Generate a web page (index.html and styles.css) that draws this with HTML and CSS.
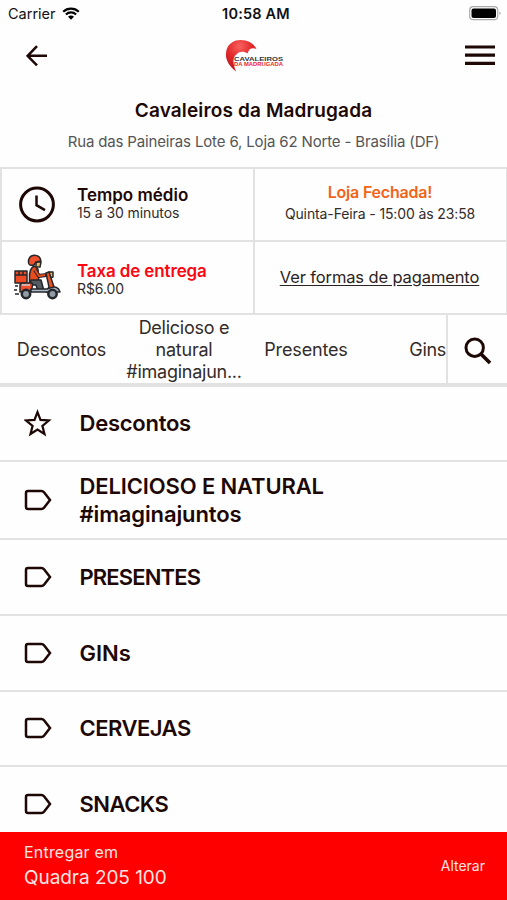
FILE: index.html
```html
<!DOCTYPE html>
<html lang="pt-BR">
<head>
<meta charset="utf-8">
<title>Cavaleiros da Madrugada</title>
<link rel="stylesheet" href="styles.css">
</head>
<body>
<svg width="0" height="0" class="defs"><symbol id="tag" viewBox="0 0 28 22"><path d="M4 2H17.500Q19 2 20 3.300L26 11L20 18.700Q19 20 17.500 20H4Q2 20 2 18V4Q2 2 4 2Z" fill="none" stroke="#1d0805" stroke-width="2.500"/></symbol></svg>
<div class="app">
  <div class="status">
    <div class="carrier"><span class="carrier-name">Carrier</span>
      <svg width="18" height="13" viewBox="0 0 18 13"><g fill="none" stroke="#000" stroke-width="2.200"><path d="M1.200 4.700A11.200 11.200 0 0 1 16.800 4.700"/><path d="M3.900 7.500A7.200 7.200 0 0 1 14.100 7.500"/></g><path d="M9 12.800L6 9.700A4.200 4.200 0 0 1 12 9.700Z"/></svg>
    </div>
    <span class="time">10:58 AM</span>
    <svg class="battery" width="33" height="15" viewBox="0 0 33 15"><rect x=".7" y=".7" width="28" height="13" rx="3.500" fill="#fff" stroke="#aaa" stroke-width="1.200"/><rect x="2.500" y="2.500" width="24.500" height="9.500" rx="2"/><path d="M30.500 5.500Q32.500 7.200 30.500 9Z" fill="#888"/></svg>
  </div>
  <header class="header">
    <svg width="22" height="22" viewBox="0 0 22 22"><path d="M11 1.200L1.600 10.800L11 20.400M2 10.800H21" fill="none" stroke="#1d0805" stroke-width="2.500"/></svg>
    <svg class="logo" width="60" height="34" viewBox="0 0 60 34">
      <defs><radialGradient id="red" cx=".45" cy=".2" r=".8"><stop offset="0" stop-color="#f8615e"/><stop offset=".5" stop-color="#e2292b"/><stop offset="1" stop-color="#b91520"/></radialGradient></defs>
      <path d="M11 32.500C4 27 .5 21 1 14.500C1.500 5.500 8 1 15.500 1C23 1 28.500 4 31.500 10C27 8 24 9.500 22.500 14.500C19 12 14 12.500 12 15C7.500 18 7.500 24 11 32.500Z" fill="url(#red)"/>
      <g font-family="Liberation Sans" font-weight="700"><text x="9" y="21.700" font-size="6" textLength="49" lengthAdjust="spacingAndGlyphs" fill="#333">CAVALEIROS</text><text x="9" y="26.600" font-size="5.400" textLength="49" lengthAdjust="spacingAndGlyphs" fill="#ef2424">DA MADRUGADA</text></g>
    </svg>
    <svg width="30" height="22" viewBox="0 0 30 22"><path d="M0 2H30M0 10.200H30M0 18.400H30" stroke="#1d0805" stroke-width="3.200"/></svg>
  </header>
  <section class="store">
    <h1>Cavaleiros da Madrugada</h1>
    <p>Rua das Paineiras Lote 6, Loja 62 Norte - Brasília (DF)</p>
  </section>
  <section class="info">
    <div class="cell average">
      <div class="pic"><svg width="38" height="38" viewBox="0 0 38 38"><g fill="none" stroke="#1d0805"><circle cx="19" cy="18.500" r="16.400" stroke-width="3"/><path d="M18.500 9.500V19.200L27 24.100" stroke-width="2.500"/></g></svg></div>
      <div class="copy"><div class="strong">Tempo médio</div><div class="small">15 a 30 minutos</div></div>
    </div>
    <div class="cell mid hours"><div class="closed">Loja Fechada!</div><div class="sub">Quinta-Feira - 15:00 às 23:58</div></div>
    <div class="cell fee">
      <div class="pic"><svg width="48" height="48" viewBox="0 0 48 48" stroke="#26272c" stroke-width="1.500" stroke-linejoin="round">
        <path d="M20 12Q15 15 15.500 24V30H25L24 15Z" fill="#e84b1c"/>
        <path d="M17 26H27L30 37H24L22 31H16Z" fill="#555a63"/>
        <path d="M22 8H27L26 13H22Z" fill="#efb967"/>
        <path d="M14.500 9Q14 2 20 1.200Q26 1 27 7L22 8L20 11Q15 12 14.500 9Z" fill="#f0502b"/>
        <path d="M21 16L25 22L32 21" fill="none" stroke="#26272c" stroke-width="4"/><path d="M21 16L25 22L31 21" fill="none" stroke="#e84b1c" stroke-width="2"/>
        <path d="M35 18H39V23L36 24Z" fill="#f4b24a"/>
        <path d="M32 19L35 18L40 33L38 38H32L35 33Z" fill="#ed5320"/>
        <rect x="1" y="17" width="12" height="12" fill="#ef4a24"/><path d="M1 21H13M5 17V21M9 17V21" fill="none"/>
        <path d="M6 31Q6 29 9 29H18Q19 30 18 34L16 38H6Z" fill="#f0502b"/>
        <path d="M17 35H33L36 34Q44 31 46 38H17Z" fill="#aebbc4"/>
        <circle cx="12" cy="40" r="4.200" fill="#8f9ca6" stroke-width="2.500"/><circle cx="38.500" cy="40" r="4.200" fill="#8f9ca6" stroke-width="2.500"/>
        <path d="M1 32H4M0 36H3M1 40H5" fill="none"/><path d="M8 31H16" stroke="#c9d0d4" fill="none"/>
      </svg></div>
      <div class="copy"><div class="strong red">Taxa de entrega</div><div class="small">R$6.00</div></div>
    </div>
    <div class="cell mid"><a class="pay">Ver formas de pagamento</a></div>
  </section>
  <nav class="tabs">
    <div class="strip"><span>Descontos</span><span class="long">Delicioso e<br>natural<br>#imaginajun...</span><span>Presentes</span><span class="last">Gins</span></div>
    <div class="search"><svg width="28" height="28" viewBox="0 0 28 28"><g fill="none" stroke="#1d0805"><circle cx="10.700" cy="10.700" r="8.700" stroke-width="3"/><path d="M17 17L26 26" stroke-width="3.700"/></g></svg></div>
  </nav>
  <main class="list">
    <div class="row"><svg width="28" height="28" viewBox="0 0 28 28"><path d="M13.500 3.100L16.500 10.900L24.900 11.500L18.400 16.900L20.500 25L13.500 20.600L6.500 25L8.600 16.900L2.100 11.500L10.500 10.900Z" fill="none" stroke="#1d0805" stroke-width="2.200"/></svg><span>Descontos</span></div>
    <div class="row tall"><svg width="28" height="22"><use href="#tag"/></svg><div>DELICIOSO E NATURAL<br>#imaginajuntos</div></div>
    <div class="row caps"><svg width="28" height="22"><use href="#tag"/></svg><span class="tight">PRESENTES</span></div>
    <div class="row"><svg width="28" height="22"><use href="#tag"/></svg><span class="mixed">GINs</span></div>
    <div class="row caps"><svg width="28" height="22"><use href="#tag"/></svg><span>CERVEJAS</span></div>
    <div class="row caps"><svg width="28" height="22"><use href="#tag"/></svg><span>SNACKS</span></div>
  </main>
  <footer class="deliver"><div><div class="to">Entregar em</div><div class="addr">Quadra 205 100</div></div><span class="change">Alterar</span></footer>
</div>
</body>
</html>
```
FILE: styles.css
```css
* { box-sizing: border-box; }
body { margin: 0; background: #fefefe; color: #1d0805; font-family: Inter, "Liberation Sans", sans-serif; }
svg { display: block; flex: none; }
.defs { display: none; }
.app { height: 900px; display: flex; flex-direction: column; overflow: hidden; }
.app > * { flex: none; }
.status { height: 28px; display: grid; grid-template-columns: 1fr auto 1fr; align-items: center; padding: 0 5px 1px 8px; color: #111; font-size: 14.5px; }
.carrier { display: flex; align-items: center; gap: 7px; margin-top: -1px; }
.carrier svg { margin-left: -1px; }
.time { font-weight: 600; letter-spacing: .2px; margin-left: 2px; }
.battery { justify-self: end; }
.header { height: 55px; display: flex; align-items: center; justify-content: space-between; padding: 0 12px 0 26px; }
.logo { margin-right: 4px; }
.store { height: 84px; text-align: center; white-space: nowrap; padding-top: 15px; }
h1, p { margin: 0; }
h1 { font-size: 19px; line-height: 26px; font-weight: 600; letter-spacing: .14px; }
p { font-size: 15px; line-height: 20px; margin-top: 8px; color: #555; letter-spacing: -.15px; }
.info { height: 148px; display: grid; grid-template-columns: 1fr 1fr; grid-template-rows: 1fr 1fr; gap: 2px; padding: 2px 1px 2px 2px; background: #e2e2e2; white-space: nowrap; }
.cell { background: #fefefe; display: flex; align-items: center; }
.pic { width: 75px; display: flex; justify-content: center; padding-right: 5px; flex: none; }
.fee .pic { padding-right: 4px; }
.mid { flex-direction: column; justify-content: center; }
.average .copy { padding-bottom: 4px; }
.fee .copy { padding-top: 2px; }
.strong { font-size: 17px; font-weight: 600; line-height: 19px; }
.small { font-size: 14px; line-height: 15px; color: #332b29; letter-spacing: -.1px; }
.red { color: #fb0712; letter-spacing: -.13px; }
.hours { padding: 0 1px 4px 0; }
.closed { color: #f26418; font-size: 16px; font-weight: 600; line-height: 22px; letter-spacing: -.2px; }
.sub { font-size: 14px; line-height: 21px; color: #332b29; letter-spacing: -.12px; }
.pay { font-size: 16.5px; letter-spacing: -.12px; text-decoration: underline; text-underline-offset: 2px; color: #2b2321; padding: 0 2px 2px 0; }
.tabs { height: 71.500px; display: flex; border-bottom: 4px solid #e2e2e2; color: #332b29; font-size: 18px; line-height: 21.700px; letter-spacing: -.15px; }
.strip { flex: 1; display: grid; grid-template-columns: 123px 122px 122px 79px; align-items: center; overflow: hidden; text-align: center; white-space: nowrap; padding-top: 2px; }
.long { letter-spacing: -.25px; }
.last { text-align: right; letter-spacing: -.3px; }
.search { width: 61px; border-left: 2px solid #e2e2e2; display: flex; align-items: center; justify-content: center; padding-top: 4px; }
.list { height: 445.500px; overflow: hidden; }
.row { height: 75.700px; display: flex; align-items: center; gap: 27.500px; padding-left: 24px; border-bottom: 2px solid #e2e2e2; font-size: 22px; font-weight: 600; line-height: 28px; letter-spacing: -.25px; white-space: nowrap; }
.tall { height: 78px; letter-spacing: -.13px; }
.caps { letter-spacing: -.5px; }
.caps .tight { letter-spacing: -.85px; }
.mixed { letter-spacing: 0; }
.deliver { height: 68px; background: #fe0000; color: #ffe4e0; display: flex; justify-content: space-between; align-items: center; padding: 0 22px 1px 24px; }
.to { font-size: 16px; line-height: 24px; letter-spacing: .2px; }
.addr { font-size: 19px; line-height: 27px; letter-spacing: -.05px; }
.change { font-size: 14px; }
```
